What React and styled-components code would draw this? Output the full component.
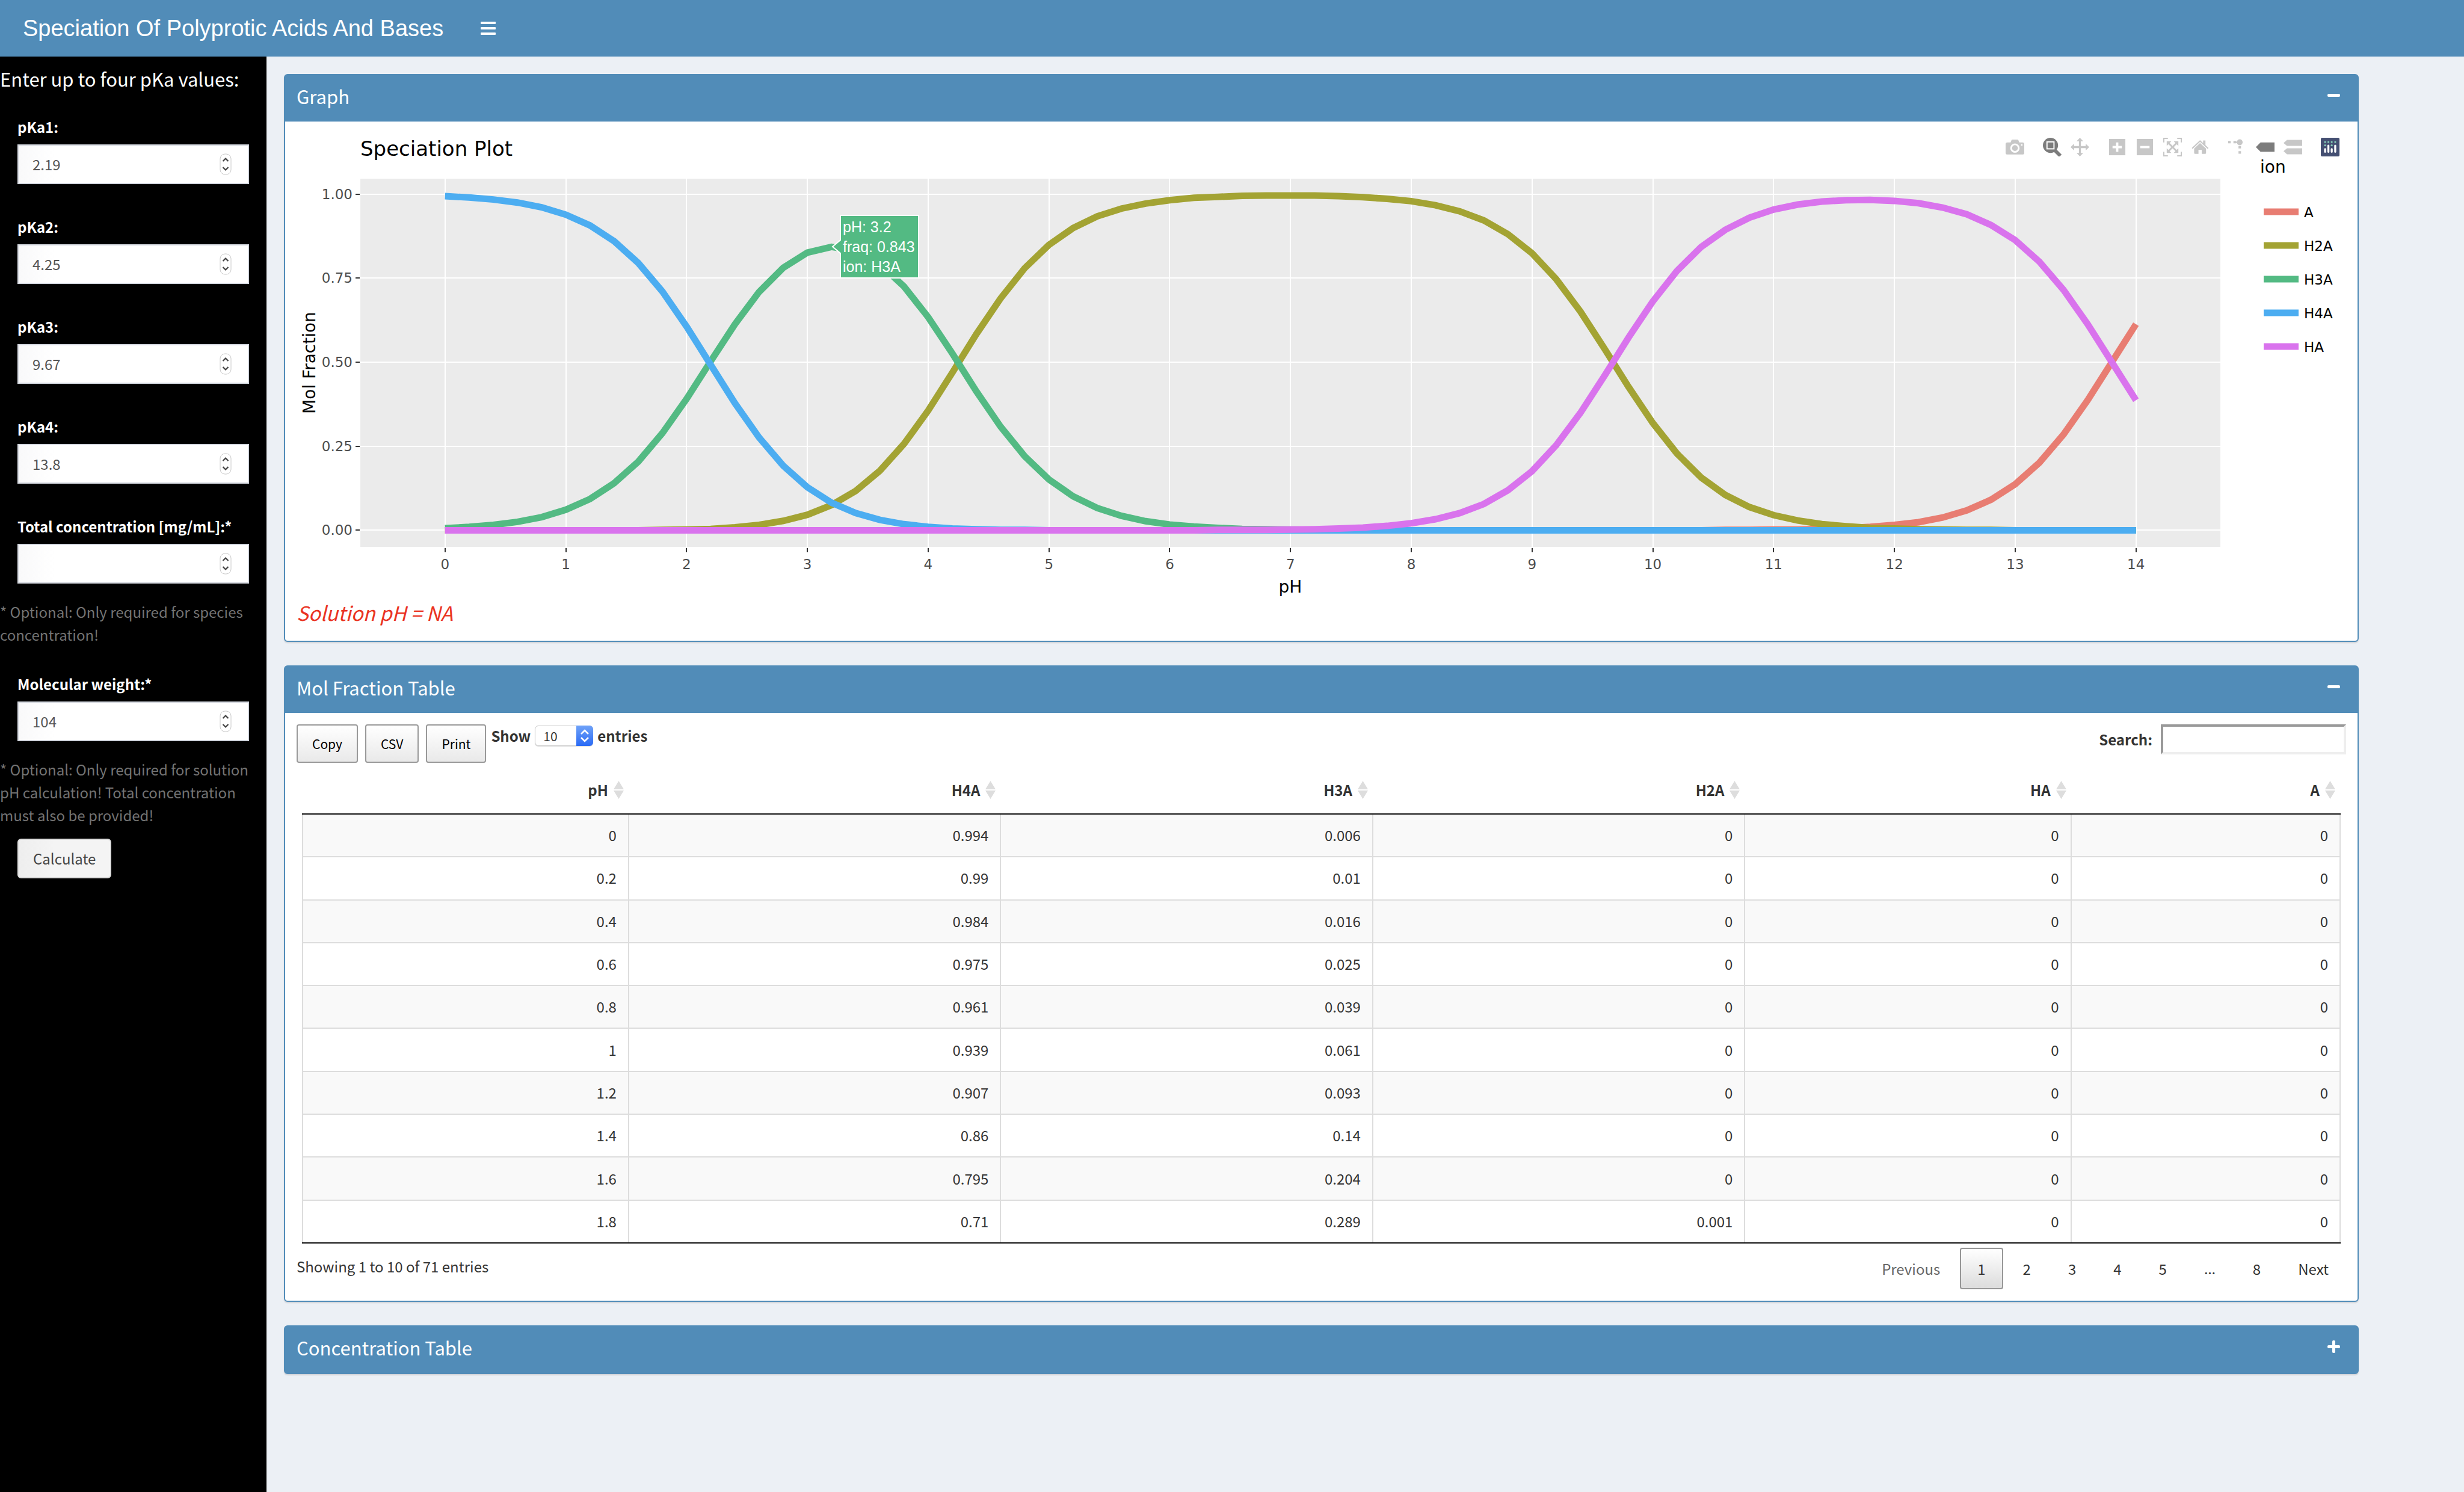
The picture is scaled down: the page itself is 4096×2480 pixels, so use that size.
import React from "react";
import styled, { createGlobalStyle } from "styled-components";

const BLUE = "#518cb8";
const SANS = `"Noto Sans CJK SC", "Source Sans Pro", "Open Sans", sans-serif`;
const PLOT_FONT = `"DejaVu Sans", Verdana, sans-serif`;

const GlobalStyle = createGlobalStyle`
  *, *::before, *::after { box-sizing: border-box; }
  body {
    margin: 0;
    background: #ecf0f5;
    color: #333;
    font-family: ${SANS};
    font-size: 24px;
    line-height: 38px;
  }
  button, input, select { font: inherit; color: inherit; margin: 0; }
`;

/* ---------- page frame ---------- */

const Page = styled.div`
  min-height: 100vh;
  display: flex;
  flex-direction: column;
`;

const TopBar = styled.header`
  display: flex;
  align-items: center;
  height: 94px;
  padding-left: 38px;
  gap: 58px;
  background: ${BLUE};
  color: #fff;
`;

const Brand = styled.h1`
  margin: 0;
  font-family: "Liberation Sans", Arial, sans-serif;
  font-size: 38px;
  font-weight: 300;
  line-height: 38px;
`;

const IconButton = styled.button`
  display: flex;
  padding: 4px;
  border: 0;
  background: none;
  color: #fff;
  cursor: pointer;
`;

const Columns = styled.div`
  flex: 1;
  display: grid;
  grid-template-columns: 443px minmax(0, 1fr);
`;

/* ---------- sidebar ---------- */

const Sidebar = styled.aside`
  padding-top: 20px;
  background: #000;
  color: #fff;
`;

const SidebarTitle = styled.h2`
  margin: 0 0 20px;
  font-size: 31px;
  font-weight: 400;
  line-height: 34px;
`;

const FieldGroup = styled.div`
  padding: 24px 29px 28px;
`;

const FieldLabel = styled.label`
  display: block;
  margin-bottom: 10px;
  font-weight: 700;
`;

const NumberBox = styled.div`
  display: flex;
  align-items: center;
  height: 66px;
  padding: 0 27px 0 23px;
  border: 2px solid #d2d6de;
  background: linear-gradient(to right, #f9f9fa, #fff 60px);
  color: #555;
`;

const NumberInput = styled.input`
  flex: 1;
  min-width: 0;
  padding: 0;
  border: 0;
  outline: 0;
  background: none;
  appearance: textfield;
  &::-webkit-inner-spin-button,
  &::-webkit-outer-spin-button { appearance: none; margin: 0; }
`;

const HelpText = styled.p`
  margin: 0 0 20px;
  color: #737373;
`;

const CalculateButton = styled.button`
  height: 66px;
  margin-left: 29px;
  padding: 0 24px;
  border: 2px solid #ddd;
  border-radius: 6px;
  background: linear-gradient(to right, #eee, #f4f4f4 60px);
  color: #444;
`;

/* ---------- boxes ---------- */

const Content = styled.main`
  display: flex;
  flex-direction: column;
  gap: 39px;
  padding: 29px 175px 29px 29px;
`;

const Panel = styled.section`
  border: 2px solid ${BLUE};
  border-radius: 6px;
  background: #fff;
  box-shadow: 0 2px 2px rgba(0, 0, 0, 0.12);
`;

const PanelHeader = styled.header`
  display: flex;
  align-items: flex-start;
  justify-content: space-between;
  height: 77px;
  padding: 18px 25px 0 19px;
  background: ${BLUE};
  color: #fff;
`;

const PanelTitle = styled.h3`
  margin: 0;
  font-size: 31px;
  font-weight: 400;
  line-height: 34px;
`;

const PanelBody = styled.div`
  padding: 19px;
`;

/* ---------- plot ---------- */

const PlotArea = styled.div`
  position: relative;
  svg.chart { display: block; width: 100%; height: auto; }
`;

const ModeBar = styled.div`
  position: absolute;
  top: 8px;
  right: 11px;
  display: flex;
  gap: 31px;
`;

const ModeGroup = styled.div`
  display: flex;
  gap: 15px;
`;

const ModeButton = styled.button`
  display: block;
  width: 31px;
  height: 31px;
  padding: 0;
  border: 0;
  background: none;
  color: ${(p) => (p.$active ? "#7c7c7c" : "#c7c7c7")};
  svg { display: block; width: 31px; height: 31px; }
`;

const SolutionText = styled.p`
  margin: 7px 0 9px;
  color: #ea3323;
  font-size: 33px;
  font-style: italic;
`;

/* ---------- table ---------- */

const Toolbar = styled.div`
  display: flex;
  align-items: flex-start;
  height: 64px;
`;

const ExportButton = styled.button`
  height: 64px;
  margin-right: 12px;
  padding: 0 24px;
  border: 2px solid #999;
  border-radius: 4px;
  background: linear-gradient(#fff, #e9e9e9);
  color: #000;
  font-size: 21px;
`;

const LengthLabel = styled.label`
  display: flex;
  align-items: center;
  gap: 7px;
  margin-left: -4px;
  font-weight: 700;
`;

const SelectShell = styled.span`
  position: relative;
  display: flex;
`;

const LengthSelect = styled.select`
  width: 97px;
  height: 34px;
  padding: 0 0 0 13px;
  border: 1px solid #c8c8c8;
  border-radius: 6px;
  background: #fff;
  box-shadow: 0 1px 1px rgba(0, 0, 0, 0.15);
  appearance: none;
  font-size: 21px;
  font-weight: 400;
  line-height: 30px;
`;

const SelectBadge = styled.span`
  position: absolute;
  inset: 0 0 0 auto;
  width: 28px;
  display: flex;
  align-items: center;
  justify-content: center;
  border-radius: 0 6px 6px 0;
  background: linear-gradient(#6fa2f8, #2a6af5);
  pointer-events: none;
`;

const SearchLabel = styled.label`
  display: flex;
  align-items: center;
  gap: 14px;
  margin-left: auto;
  font-weight: 700;
`;

const SearchInput = styled.input`
  width: 308px;
  height: 50px;
  padding: 2px;
  border: 4px solid;
  border-color: #999 #eee #eee #999;
  background: #fff;
  font-weight: 400;
`;

const TableFrame = styled.div`
  padding: 7px 9px 0;
`;

const Table = styled.table`
  width: 100%;
  height: 792px;
  table-layout: fixed;
  border-spacing: 0;
  border-bottom: 2px solid #111;
`;

const HeadCell = styled.th`
  height: 79px;
  padding: 19px 9px 20px;
  border-bottom: 2px solid #111;
  font-weight: 700;
`;

const HeadInner = styled.span`
  display: flex;
  align-items: center;
  justify-content: flex-end;
  gap: 9px;
`;

const Row = styled.tr`
  background: #fff;
  &:nth-child(odd) { background: #f9f9f9; }
`;

const Cell = styled.td`
  padding: 15px 19px 16px;
  border-right: 2px solid #ddd;
  text-align: right;
  &:first-child { border-left: 2px solid #ddd; }
  ${Row} + ${Row} & { border-top: 2px solid #ddd; }
`;

const TableFooter = styled.div`
  display: flex;
  justify-content: space-between;
  align-items: flex-start;
  padding-top: 7px;
`;

const TableInfo = styled.div`
  padding-top: 12px;
`;

const Pagination = styled.nav`
  display: flex;
  align-items: flex-start;
  gap: 4px;
`;

const PageButton = styled.button`
  height: 69px;
  padding: 0 27px;
  border: 2px solid ${(p) => (p.$current ? "#979797" : "transparent")};
  border-radius: 4px;
  background: ${(p) => (p.$current ? "linear-gradient(#fff, #dcdcdc)" : "none")};
  color: ${(p) => (p.$muted ? "#666" : "#333")};
`;

const Ellipsis = styled.span`
  padding: 0 29px;
  font-family: "Noto Sans", sans-serif;
  line-height: 69px;
`;

/* ---------- chart data ---------- */

const PKA = [2.19, 4.25, 9.67, 13.8];
const COLORS = { A: "#e87d72", H2A: "#a3a333", H3A: "#53ba83", H4A: "#4cadf1", HA: "#d973ed" };
const IONS = ["A", "H2A", "H3A", "H4A", "HA"];

function fractions(pH) {
  const h = Math.pow(10, -pH);
  const k = PKA.map((p) => Math.pow(10, -p));
  const terms = [h ** 4, h ** 3 * k[0], h ** 2 * k[0] * k[1], h * k[0] * k[1] * k[2], k[0] * k[1] * k[2] * k[3]];
  const total = terms.reduce((a, b) => a + b, 0);
  const [H4A, H3A, H2A, HA, A] = terms.map((t) => Math.round((t / total) * 1000) / 1000);
  return { H4A, H3A, H2A, HA, A };
}

const SERIES = Array.from({ length: 71 }, (_, i) => {
  const pH = i / 5;
  return { pH, ...fractions(pH) };
});

const AREA = { left: 106, right: 3198, top: 76, bottom: 688 };
const xAt = (pH) => 246.8 + pH * 200.78;
const yAt = (f) => 660.4 - f * 558.7;

function Chart() {
  return (
    <svg className="chart" viewBox="0 0 3407 771" fontFamily={PLOT_FONT} role="img" aria-label="Speciation Plot">
      <text x="106" y="38" fontSize="34">Speciation Plot</text>
      <rect x={AREA.left} y={AREA.top} width={AREA.right - AREA.left} height={AREA.bottom - AREA.top} fill="#ebebeb" />
      <g stroke="#fff" strokeWidth="2">
        {[0, 0.25, 0.5, 0.75, 1].map((f) => (
          <line key={f} x1={AREA.left} x2={AREA.right} y1={Math.round(yAt(f))} y2={Math.round(yAt(f))} />
        ))}
        {Array.from({ length: 15 }, (_, i) => (
          <line key={i} y1={AREA.top} y2={AREA.bottom} x1={Math.round(xAt(i))} x2={Math.round(xAt(i))} />
        ))}
      </g>
      <g fontSize="23" fill="#4d4d4d">
        {[0, 0.25, 0.5, 0.75, 1].map((f) => (
          <React.Fragment key={f}>
            <line x1="98" x2="105" y1={Math.round(yAt(f))} y2={Math.round(yAt(f))} stroke="#333" strokeWidth="2" />
            <text x="93" y={yAt(f) + 8} textAnchor="end">{f.toFixed(2)}</text>
          </React.Fragment>
        ))}
        {Array.from({ length: 15 }, (_, i) => (
          <React.Fragment key={i}>
            <line y1="690" y2="697" x1={Math.round(xAt(i))} x2={Math.round(xAt(i))} stroke="#333" strokeWidth="2" />
            <text x={xAt(i)} y="725" textAnchor="middle">{i}</text>
          </React.Fragment>
        ))}
      </g>
      <text x="1652" y="764" fontSize="28" textAnchor="middle">pH</text>
      <text transform="translate(31 382) rotate(-90)" fontSize="28" textAnchor="middle">Mol Fraction</text>
      <g fill="none" strokeWidth="11" strokeMiterlimit="2">
        {IONS.map((ion) => (
          <polyline
            key={ion}
            stroke={COLORS[ion]}
            points={SERIES.map((d) => `${xAt(d.pH).toFixed(1)},${yAt(d[ion]).toFixed(1)}`).join(" ")}
          />
        ))}
      </g>
      <text x="3264" y="66" fontSize="28">ion</text>
      {IONS.map((ion, i) => (
        <g key={ion}>
          <line x1="3270" x2="3328" y1={131 + i * 56} y2={131 + i * 56} stroke={COLORS[ion]} strokeWidth="11" />
          <text x="3337" y={140 + i * 56} fontSize="23">{ion}</text>
        </g>
      ))}
      <path d="M891 189 L904 178 V137 H1034 V241 H904 V200 Z" fill={COLORS.H3A} stroke="#fff" strokeWidth="2" />
      <g fill="#fff" fontSize="25" fontFamily='"Liberation Sans", Arial, sans-serif'>
        <text x="908" y="165">pH: 3.2</text>
        <text x="908" y="198">fraq: 0.843</text>
        <text x="908" y="231">ion: H3A</text>
      </g>
    </svg>
  );
}

/* ---------- icons ---------- */

const Glyph = ({ children }) => (
  <svg viewBox="0 0 32 32" fill="currentColor" aria-hidden="true">{children}</svg>
);

const ICONS = {
  camera: (
    <Glyph>
      <path fillRule="evenodd" d="M3 8 H8.5 L10 4.3 Q10.600 3 12 3 H20 Q21.400 3 22 4.300 L23.500 8 H29 Q32 8 32 11 V25.700 Q32 28.700 29 28.700 H3 Q0 28.700 0 25.700 V11 Q0 8 3 8 Z M16 9.700 A8 8 0 1 0 16 25.700 A8 8 0 1 0 16 9.700 Z" />
      <circle cx="16" cy="17.700" r="5" />
      <circle cx="27.700" cy="12.300" r="1.500" fill="#fff" />
    </Glyph>
  ),
  zoom: (
    <Glyph>
      <circle cx="13" cy="13" r="13" />
      <path d="M20 21 L30 31" stroke="currentColor" strokeWidth="6" />
      <rect x="7" y="7" width="12" height="12" fill="none" stroke="#fff" strokeWidth="2" />
    </Glyph>
  ),
  pan: (
    <Glyph>
      <path d="M16 0 L21.700 6 H17.700 V14.300 H26 V10.300 L32 16 L26 21.700 V17.700 H17.700 V26 H21.700 L16 32 L10.300 26 H14.300 V17.700 H6 V21.700 L0 16 L6 10.300 V14.300 H14.300 V6 H10.300 Z" />
    </Glyph>
  ),
  zoomIn: (
    <Glyph>
      <rect x="2" y="2" width="28" height="28" />
      <path d="M8 16 H24 M16 8 V24" stroke="#fff" strokeWidth="4" />
    </Glyph>
  ),
  zoomOut: (
    <Glyph>
      <rect x="2" y="2" width="28" height="28" />
      <path d="M8 16 H24" stroke="#fff" strokeWidth="4" />
    </Glyph>
  ),
  autoscale: (
    <Glyph>
      <path d="M1 8 V1 H8 M24 1 H31 V8 M31 24 V31 H24 M8 31 H1 V24" fill="none" stroke="currentColor" strokeWidth="2" />
      <path d="M9 9 L23 23 M23 9 L9 23" stroke="currentColor" strokeWidth="3" />
      <path d="M6 6 H14 L11.500 8.500 L8.500 11.500 L6 14 Z M26 6 V14 L23.500 11.500 L20.500 8.500 L18 6 Z M26 26 H18 L20.500 23.500 L23.500 20.500 L26 18 Z M6 26 V18 L8.500 20.500 L11.500 23.500 L14 26 Z" />
    </Glyph>
  ),
  home: (
    <Glyph>
      <path d="M15.700 4 L21 9 V4.700 H25 V12.600 L30.300 17.600 L28.700 19 L15.700 7 L3 19 L1.400 17.600 Z" />
      <path d="M15.700 9 L26 18.600 V26 Q26 27.700 24.300 27.700 H18.700 V20.700 H13 V27.700 H7.300 Q5.600 27.700 5.600 26 V18.600 Z" />
    </Glyph>
  ),
  spikes: (
    <Glyph>
      <path d="M0 5.300 H4.300 V9.600 H0 Z M9 5.300 H13.300 V9.600 H9 Z M17.700 14 H22 V18.300 H17.700 Z M17.700 23 H22 V27.300 H17.700 Z M13 6.500 H16 V9 H13 Z" />
      <circle cx="19.800" cy="7.700" r="5" />
    </Glyph>
  ),
  closest: (
    <Glyph>
      <path d="M0 16 L8 8 H32 V24 H8 Z" />
    </Glyph>
  ),
  compare: (
    <Glyph>
      <path d="M0 9 L6 3.500 H32 V14 H6 Z M0 23 L6 18 H32 V28.500 H6 Z" />
    </Glyph>
  ),
  logo: (
    <Glyph>
      <rect width="32" height="32" rx="2" fill="#444f72" />
      <g fill="#86cdb8">
        {[7.3, 13, 18.7, 24.7].map((x) => <circle key={x} cx={x} cy="7.300" r="1.700" />)}
        <circle cx="7.300" cy="13" r="1.700" />
        <circle cx="18.700" cy="13" r="1.700" />
      </g>
      <path d="M7.300 19.500 V24 M13 13.500 V24 M18.700 19.500 V24 M24.700 13.500 V24" stroke="#fff" strokeWidth="3.400" strokeLinecap="round" />
    </Glyph>
  ),
};

const MODE_GROUPS = [
  [["camera", "Download plot as a png"]],
  [["zoom", "Zoom"], ["pan", "Pan"]],
  [["zoomIn", "Zoom in"], ["zoomOut", "Zoom out"], ["autoscale", "Autoscale"], ["home", "Reset axes"]],
  [["spikes", "Toggle Spike Lines"], ["closest", "Show closest data on hover"], ["compare", "Compare data on hover"]],
  [["logo", "Produced with Plotly"]],
];

const Stepper = () => (
  <svg width="20" height="36" viewBox="0 0 20 36" fill="none" aria-hidden="true">
    <rect x="1" y="1" width="18" height="34" rx="8" stroke="#c9c9c9" strokeWidth="1" />
    <path d="M5.500 13 L10 8.500 L14.500 13 M5.500 23 L10 27.500 L14.500 23" stroke="#444" strokeWidth="2.200" />
  </svg>
);

const SortIcon = () => (
  <svg width="17" height="30" viewBox="0 0 17 30" fill="#ddd" aria-hidden="true">
    <path d="M8.500 0 L17 14 H0 Z M0 16 H17 L8.500 30 Z" />
  </svg>
);

const Toggle = ({ open }) => (
  <IconButton type="button" aria-label={open ? "Collapse" : "Expand"}>
    <svg width="21" height="23" viewBox="0 0 21 23" fill="#fff" aria-hidden="true">
      <rect y="9" width="21" height="5" rx="2" />
      {!open && <rect x="8" y="1" width="5" height="21" rx="2" />}
    </svg>
  </IconButton>
);

/* ---------- components ---------- */

function Field({ id, label, value }) {
  return (
    <FieldGroup>
      <FieldLabel htmlFor={id}>{label}</FieldLabel>
      <NumberBox>
        <NumberInput id={id} type="number" step="any" defaultValue={value} />
        <Stepper />
      </NumberBox>
    </FieldGroup>
  );
}

function Box({ title, open, children }) {
  return (
    <Panel>
      <PanelHeader>
        <PanelTitle>{title}</PanelTitle>
        <Toggle open={open} />
      </PanelHeader>
      {open && <PanelBody>{children}</PanelBody>}
    </Panel>
  );
}

const TABLE_COLUMNS = [
  ["pH", "16.05%"],
  ["H4A", "18.25%"],
  ["H3A", "18.25%"],
  ["H2A", "18.25%"],
  ["HA", "16%"],
  ["A", "13.2%"],
];

export default function App() {
  return (
    <Page>
      <GlobalStyle />
      <TopBar>
        <Brand>Speciation Of Polyprotic Acids And Bases</Brand>
        <IconButton type="button" aria-label="Toggle navigation">
          <svg width="25" height="22" viewBox="0 0 25 22" fill="#fff" aria-hidden="true">
            <rect width="25" height="4" rx="1" />
            <rect y="9" width="25" height="4" rx="1" />
            <rect y="18" width="25" height="4" rx="1" />
          </svg>
        </IconButton>
      </TopBar>
      <Columns>
        <Sidebar>
          <SidebarTitle>Enter up to four pKa values:</SidebarTitle>
          <Field id="pka1" label="pKa1:" value="2.19" />
          <Field id="pka2" label="pKa2:" value="4.25" />
          <Field id="pka3" label="pKa3:" value="9.67" />
          <Field id="pka4" label="pKa4:" value="13.8" />
          <Field id="conc" label="Total concentration [mg/mL]:*" value="" />
          <HelpText>* Optional: Only required for species concentration!</HelpText>
          <Field id="mw" label="Molecular weight:*" value="104" />
          <HelpText>* Optional: Only required for solution pH calculation! Total concentration must also be provided!</HelpText>
          <CalculateButton type="button">Calculate</CalculateButton>
        </Sidebar>
        <Content>
          <Box title="Graph" open>
            <PlotArea>
              <Chart />
              <ModeBar>
                {MODE_GROUPS.map((group, i) => (
                  <ModeGroup key={i}>
                    {group.map(([name, label]) => (
                      <ModeButton key={name} type="button" aria-label={label} $active={name === "zoom" || name === "closest"}>
                        {ICONS[name]}
                      </ModeButton>
                    ))}
                  </ModeGroup>
                ))}
              </ModeBar>
            </PlotArea>
            <SolutionText>Solution pH = NA</SolutionText>
          </Box>
          <Box title="Mol Fraction Table" open>
            <Toolbar>
              <ExportButton type="button">Copy</ExportButton>
              <ExportButton type="button">CSV</ExportButton>
              <ExportButton type="button">Print</ExportButton>
              <LengthLabel>
                Show
                <SelectShell>
                  <LengthSelect defaultValue="10">
                    <option>10</option>
                    <option>25</option>
                    <option>50</option>
                    <option>100</option>
                  </LengthSelect>
                  <SelectBadge>
                    <svg width="14" height="22" viewBox="0 0 14 22" fill="none" stroke="#fff" strokeWidth="2.500" aria-hidden="true">
                      <path d="M1 8 L7 2 L13 8 M1 14 L7 20 L13 14" />
                    </svg>
                  </SelectBadge>
                </SelectShell>
                entries
              </LengthLabel>
              <SearchLabel>
                Search:
                <SearchInput type="search" />
              </SearchLabel>
            </Toolbar>
            <TableFrame>
              <Table>
                <colgroup>
                  {TABLE_COLUMNS.map(([name, width]) => <col key={name} width={width} />)}
                </colgroup>
                <thead>
                  <tr>
                    {TABLE_COLUMNS.map(([name]) => (
                      <HeadCell key={name} scope="col">
                        <HeadInner>{name}<SortIcon /></HeadInner>
                      </HeadCell>
                    ))}
                  </tr>
                </thead>
                <tbody>
                  {SERIES.slice(0, 10).map((row) => (
                    <Row key={row.pH}>
                      {TABLE_COLUMNS.map(([name]) => <Cell key={name}>{row[name]}</Cell>)}
                    </Row>
                  ))}
                </tbody>
              </Table>
            </TableFrame>
            <TableFooter>
              <TableInfo>Showing 1 to 10 of 71 entries</TableInfo>
              <Pagination aria-label="Table pages">
                <PageButton type="button" $muted>Previous</PageButton>
                <PageButton type="button" $current>1</PageButton>
                {[2, 3, 4, 5].map((n) => <PageButton key={n} type="button">{n}</PageButton>)}
                <Ellipsis>…</Ellipsis>
                <PageButton type="button">8</PageButton>
                <PageButton type="button">Next</PageButton>
              </Pagination>
            </TableFooter>
          </Box>
          <Box title="Concentration Table" open={false} />
        </Content>
      </Columns>
    </Page>
  );
}
